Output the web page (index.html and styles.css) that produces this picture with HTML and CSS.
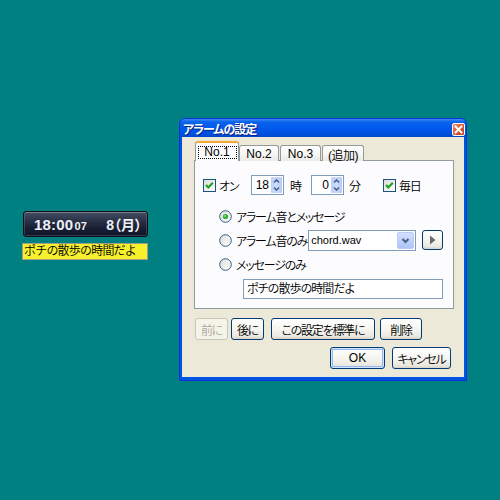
FILE: index.html
```html
<!DOCTYPE html>
<html lang="ja">
<head>
<meta charset="utf-8">
<title>アラームの設定</title>
<link rel="stylesheet" href="styles.css">
</head>
<body>
<div class="desktop">
  <div class="clock">
    <span class="time">18:00<small>07</small></span>
    <span class="date">8（月）</span>
  </div>
  <div class="note">ポチの散歩の時間だよ</div>

  <div class="window">
    <div class="titlebar">
      <span class="title">アラームの設定</span>
      <span class="close"><svg width="13" height="13" viewBox="0 0 13 13"><path d="M3.5 3.5 L9.5 9.5 M9.5 3.5 L3.5 9.5" stroke="#fff" stroke-width="2" stroke-linecap="square"/></svg></span>
    </div>
    <div class="body">
      <div class="tabs">
        <div class="tab active"><span class="focus">No.1</span></div>
        <div class="tab w40">No.2</div>
        <div class="tab w41">No.3</div>
        <div class="tab w42">(追加)</div>
      </div>
      <div class="panel">
        <div class="row1">
          <span class="chk"><svg width="11" height="11" viewBox="0 0 11 11"><path d="M2 5 L4.3 7.4 L8.8 2.8" stroke="#21a121" stroke-width="2.2" fill="none"/></svg></span>
          <span class="lbl on">オン</span>
          <span class="spin s1"><span class="num">18</span><span class="arrows"><svg width="11" height="18" viewBox="0 0 11 18"><path d="M3 6.5 L5.5 4 L8 6.5" stroke="#4d6185" stroke-width="1.6" fill="none"/><path d="M3 11.5 L5.5 14 L8 11.5" stroke="#4d6185" stroke-width="1.6" fill="none"/></svg></span></span>
          <span class="lbl ji">時</span>
          <span class="spin s2"><span class="num">0</span><span class="arrows"><svg width="11" height="18" viewBox="0 0 11 18"><path d="M3 6.5 L5.5 4 L8 6.5" stroke="#4d6185" stroke-width="1.6" fill="none"/><path d="M3 11.5 L5.5 14 L8 11.5" stroke="#4d6185" stroke-width="1.6" fill="none"/></svg></span></span>
          <span class="lbl fun">分</span>
          <span class="chk daily"><svg width="11" height="11" viewBox="0 0 11 11"><path d="M2 5 L4.3 7.4 L8.8 2.8" stroke="#21a121" stroke-width="2.2" fill="none"/></svg></span>
          <span class="lbl">毎日</span>
        </div>
        <div class="opt first">
          <span class="radio"><svg width="13" height="13" viewBox="0 0 13 13"><defs><linearGradient id="rg" x1="0" y1="0" x2="1" y2="1"><stop offset="0" stop-color="#dcdcd7"/><stop offset="1" stop-color="#ffffff"/></linearGradient></defs><circle cx="6.5" cy="6.5" r="5.8" fill="url(#rg)" stroke="#2f5d8a" stroke-width="1"/><circle cx="6.5" cy="6.5" r="2.6" fill="#2fb32f"/><circle cx="6" cy="6" r="1" fill="#8be08b"/></svg></span>
          <span class="lbl">アラーム音とメッセージ</span>
        </div>
        <div class="opt">
          <span class="radio"><svg width="13" height="13" viewBox="0 0 13 13"><circle cx="6.5" cy="6.5" r="5.8" fill="url(#rg)" stroke="#2f5d8a" stroke-width="1"/></svg></span>
          <span class="lbl">アラーム音のみ</span>
          <span class="combo"><span class="val">chord.wav</span><span class="drop"><svg width="15" height="15" viewBox="0 0 15 15"><path d="M4.5 6 L7.5 9 L10.5 6" stroke="#4d6185" stroke-width="2" fill="none"/></svg></span></span>
          <span class="btn play"><svg width="19" height="18" viewBox="0 0 19 18"><path d="M7 4.5 L7 13.5 L12.5 9 Z" fill="#6b6b6b"/></svg></span>
        </div>
        <div class="opt">
          <span class="radio"><svg width="13" height="13" viewBox="0 0 13 13"><circle cx="6.5" cy="6.5" r="5.8" fill="url(#rg)" stroke="#2f5d8a" stroke-width="1"/></svg></span>
          <span class="lbl">メッセージのみ</span>
        </div>
        <div class="textbox">ポチの散歩の時間だよ</div>
      </div>
      <div class="btnrow">
        <span class="btn disabled w32">前に</span>
        <span class="btn w32 next">後に</span>
        <span class="btn w104 std">この設定を標準に</span>
        <span class="btn w42 del">削除</span>
      </div>
      <div class="okrow">
        <span class="btn default w55 latin">OK</span>
        <span class="btn w59 cancel">キャンセル</span>
      </div>
    </div>
  </div>
</div>
</body>
</html>
```
FILE: styles.css
```css
* { box-sizing: border-box; }
html, body { margin: 0; padding: 0; }
body {
  width: 500px;
  height: 500px;
  background: #008080;
  font-family: "Liberation Sans", "Noto Sans CJK JP", sans-serif;
  font-size: 12px;
  font-weight: 350;
  font-feature-settings: "palt";
  letter-spacing: -1.2px;
  color: #000;
}
.desktop { position: relative; width: 500px; height: 500px; }

/* clock widget */
.clock {
  position: absolute;
  left: 23px;
  top: 211px;
  width: 125px;
  height: 26px;
  border-radius: 3px;
  border: 1px solid #0b0e17;
  background: linear-gradient(#454d62 0, #283045 40%, #181e31 70%, #10152a 100%);
  box-shadow: inset 0 1px 0 rgba(255,255,255,0.2), inset 0 0 0 1px rgba(120,128,150,0.35);
  display: flex;
  align-items: center;
  justify-content: space-between;
  padding: 0 5px 0 10px;
  color: #eef0f6;
  font-weight: bold;
  letter-spacing: 0;
}
.time { font-size: 15px; letter-spacing: 0.2px; }
.time small { font-size: 11px; margin-left: 1px; }
.date { font-size: 14px; }

.note {
  position: absolute;
  left: 22px;
  top: 243px;
  width: 126px;
  height: 17px;
  background: #f7f02c;
  border: 1px solid #a09e86;
  font-size: 12px;
  line-height: 15px;
  padding-left: 1px;
  white-space: nowrap;
  font-feature-settings: normal;
  letter-spacing: -0.8px;
}

/* window */
.window {
  position: absolute;
  left: 179px;
  top: 118px;
  width: 288px;
  height: 263px;
  background: #0054e3;
  border: 1px solid #0831d9;
  border-radius: 6px 6px 0 0;
  display: flex;
  flex-direction: column;
}
.titlebar {
  height: 18px;
  border-radius: 5px 5px 0 0;
  background: linear-gradient(#3b8cf5 0, #0a62ea 3px, #0058ee 9px, #0053e0 14px, #0047cf 18px);
  display: flex;
  align-items: center;
  justify-content: space-between;
  padding: 0 1px 0 3px;
}
.title {
  color: #fff;
  font-weight: bold;
  font-size: 12px;
  text-shadow: 1px 1px 0 #0a1e82;
  letter-spacing: -1px;
}
.close {
  width: 13px;
  height: 13px;
  border: 1px solid #fff;
  border-radius: 2px;
  background: linear-gradient(135deg, #f08f6c, #e05a33 45%, #c53e16);
  display: flex;
  align-items: center;
  justify-content: center;
  margin-top: 2px;
}
.close svg { display: block; margin: -1px; }

.body {
  flex: 1;
  margin: 0 2px 3px;
  background: #ece9d8;
  padding: 4px 10px 8px 12px;
  display: flex;
  flex-direction: column;
}

/* tabs */
.tabs {
  display: flex;
  align-items: flex-end;
  height: 20px;
  margin-bottom: -1px;
  padding-left: 1px;
  position: relative;
  z-index: 1;
  letter-spacing: 0;
}
.tab {
  height: 16px;
  border: 1px solid #919b9c;
  border-bottom: none;
  border-radius: 3px 3px 0 0;
  background: linear-gradient(#ffffff, #f7f7f4 50%, #ebeae4);
  display: flex;
  align-items: center;
  justify-content: center;
  margin-left: 1px;
  padding-top: 1px;
}
.tab.w40 { width: 40px; margin-left: 0; }
.tab.w41 { width: 41px; }
.tab.w42 { width: 42px; letter-spacing: -0.5px; }
.tab.active {
  width: 44px;
  height: 20px;
  margin-left: 0;
  border-top: 2px solid #f7a634;
  background: #fcfcfe;
  padding-top: 0;
}
.focus {
  width: 39px;
  height: 13px;
  border: 1px dotted #000;
  display: flex;
  align-items: center;
  justify-content: center;
}

.panel {
  height: 149px;
  border: 1px solid #919b9c;
  background: #fcfcfe;
  padding: 14px 0 0 8px;
}

.row1 { display: flex; align-items: center; height: 20px; }
.chk {
  width: 13px;
  height: 13px;
  border: 1px solid #1c5180;
  background: linear-gradient(135deg, #dcdcd7, #fff);
  display: flex;
  align-items: center;
  justify-content: center;
}
.chk svg { display: block; }
.lbl { white-space: nowrap; }
.row1 .chk + .lbl { margin-left: 3px; }
.on { width: 32px; }
.spin {
  width: 33px;
  height: 20px;
  border: 1px solid #7f9db9;
  background: #fff;
  display: flex;
  align-items: center;
  justify-content: flex-end;
  letter-spacing: 0;
}
.num { padding-right: 1px; font-size: 12px; }
.arrows {
  width: 13px;
  height: 18px;
  background: linear-gradient(90deg, #bcd0fa, #cddbfc 50%, #b5c9f7);
  border: 1px solid #fff;
  border-radius: 2px;
  display: flex;
  align-items: center;
  justify-content: center;
}
.arrows svg { display: block; margin: -1px; }
.ji { margin-left: 6px; width: 21px; }
.fun { margin-left: 5px; width: 34px; }

.opt { display: flex; align-items: center; height: 20px; margin-top: 4px; padding-left: 16px; }
.opt.first { margin-top: 11px; }
.radio { width: 13px; height: 13px; margin-right: 4px; }
.radio svg { display: block; }
.combo {
  width: 108px;
  height: 21px;
  margin-left: 1px;
  border: 1px solid #7f9db9;
  background: #fff;
  display: flex;
  align-items: center;
  justify-content: space-between;
  padding: 0 1px 0 2px;
  letter-spacing: 0;
}
.val { font-size: 11px; }
.drop {
  width: 17px;
  height: 17px;
  border: 1px solid #b9cbf6;
  border-radius: 2px;
  background: linear-gradient(#d3e0fd, #bccff9 60%, #aec4f6);
  display: flex;
  align-items: center;
  justify-content: center;
}
.drop svg { display: block; }

.btn {
  height: 22px;
  border: 1px solid #003c74;
  border-radius: 3px;
  background: linear-gradient(#ffffff, #f6f5f0 50%, #ebe9e1 85%, #d8d4c8);
  display: flex;
  align-items: center;
  justify-content: center;
  white-space: nowrap;
}
.play { width: 21px; height: 20px; margin-left: 6px; }
.play svg { display: block; }

.textbox {
  margin: 5px 0 0 40px;
  width: 200px;
  height: 20px;
  border: 1px solid #7f9db9;
  background: #fff;
  padding-left: 3px;
  line-height: 18px;
  white-space: nowrap;
  letter-spacing: -0.9px;
}

.btnrow { display: flex; margin-top: 9px; padding-left: 1px; }
.w32 { width: 33px; }
.w104 { width: 104px; }
.w42 { width: 42px; }
.w55 { width: 55px; }
.w59 { width: 59px; }
.next { margin-left: 3px; }
.std { margin-left: 7px; }
.del { margin-left: 5px; }
.btn.disabled {
  border-color: #c9c7ba;
  background: #f5f4ea;
  color: #aca899;
}
.okrow { display: flex; justify-content: flex-end; margin-top: 7px; padding-right: 3px; }
.btn.default { box-shadow: inset 0 0 0 1px #cee7ff, inset 0 0 0 2px #98b8ea; }
.latin { letter-spacing: 0; }
.cancel { margin-left: 7px; }
```
